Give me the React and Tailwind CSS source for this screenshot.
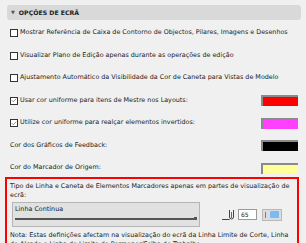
import { Check } from 'lucide-react'

function CheckRow({ checked, label, color }) {
  return (
    <div className="h-[22.5px] flex items-center pl-[10px] pr-[8px]">
      <span className="w-[8px] h-[8px] border border-[#333] bg-white flex items-center justify-center shrink-0">
        {checked && <Check size={7} strokeWidth={2} className="text-[#333]" />}
      </span>
      <span className="ml-[2px] flex-1 whitespace-nowrap">{label}</span>
      {color && (
        <span className={`w-[37px] h-[11px] shrink-0 border-t-2 border-l-2 border-[#8a8a8a] ${color}`} />
      )}
    </div>
  )
}

function ColorRow({ label, color }) {
  return (
    <div className="h-[22.5px] flex items-center pl-[10px] pr-[8px]">
      <span className="flex-1">{label}</span>
      <span className={`w-[37px] h-[11px] border-t-2 border-l-2 border-[#8a8a8a] ${color}`} />
    </div>
  )
}

export default function App() {
  return (
    <div
      className="w-[306px] h-[243px] overflow-hidden bg-[#f0f0f0] text-[6.4px] text-[#1b1b1b] pt-[5px]"
      style={{ fontFamily: '"DejaVu Sans", Verdana, sans-serif' }}
    >
      <div className="mx-[7px] mr-[5px] h-[15px] rounded-[3px] bg-[#d9d9d9] flex items-center">
        <span className="ml-[4px] text-[5px] text-[#555]">▼</span>
        <span className="ml-[4px] font-bold text-[6.2px] text-[#222]">OPÇÕES DE ECRÃ</span>
      </div>

      <div className="mt-[1.75px]">
        <CheckRow label="Mostrar Referência de Caixa de Contorno de Objectos, Pilares, Imagens e Desenhos" />
        <CheckRow label="Visualizar Plano de Edição apenas durante as operações de edição" />
        <CheckRow label="Ajustamento Automático da Visibilidade da Cor de Caneta para Vistas de Modelo" />
        <CheckRow checked label="Usar cor uniforme para itens de Mestre nos Layouts:" color="bg-[#ff0000]" />
        <CheckRow checked label="Utilize cor uniforme para realçar elementos invertidos:" color="bg-[#ff40ff]" />
        <ColorRow label="Cor dos Gráficos de Feedback:" color="bg-black" />
        <ColorRow label="Cor do Marcador de Origem:" color="bg-[#ffff99]" />
      </div>

      <div className="mx-[5px] mr-[7px] mt-[-2px] border-2 border-[#ff0000] px-[3px] pt-[3px] pb-[6px]">
        <p className="leading-[8.5px]">
          Tipo de Linha e Caneta de Elementos Marcadores apenas em partes de visualização de ecrã:
        </p>
        <div className="mt-[3px] flex items-center">
          <div className="ml-[2px] w-[188px] h-[25px] bg-[#e1e1e1] border border-[#b5b5b5] px-[2px] pt-[2px]">
            <div className="leading-[9px]">Linha Contínua</div>
            <div className="mt-[3px] flex items-center">
              <div className="flex-1 h-[1.5px] bg-[#555]" />
              <span className="w-[3px] h-[3px] bg-[#555]" />
            </div>
          </div>
          <svg width="14" height="12" viewBox="0 0 14 12" className="ml-[22px] mt-[-2px]">
            <path d="M0 11.5 H7.5" stroke="#444" strokeWidth="1" fill="none" />
            <path d="M7.5 2 V9 Q7.5 11 9.5 11 Q11.5 11 11.5 9 V2" stroke="#444" strokeWidth="1" fill="none" />
            <path d="M9.5 4 V10" stroke="#444" strokeWidth="0.8" fill="none" />
          </svg>
          <div className="ml-[2px] w-[19px] h-[11px] bg-white border border-[#9a9a9a] text-[6px] leading-[9px] pl-[2px]">
            65
          </div>
          <div className="ml-[5px] w-[20px] h-[12px] bg-[#dcdcdc] border border-[#b8b8b8] flex items-center px-[2px]">
            <span className="w-[1px] h-[6px] bg-[#3b8bea]" />
            <span className="ml-[4px] w-[9px] h-[7px] rounded-[1px] bg-[#7db9f2]" />
          </div>
        </div>
        <p className="mt-[4px] leading-[9px]">
          Nota: Estas definições afectam na visualização do ecrã da Linha Limite de Corte, Linha de
          Alçado e Linha de Limite de Pormenor/Folha de Trabalho.
        </p>
      </div>
    </div>
  )
}
